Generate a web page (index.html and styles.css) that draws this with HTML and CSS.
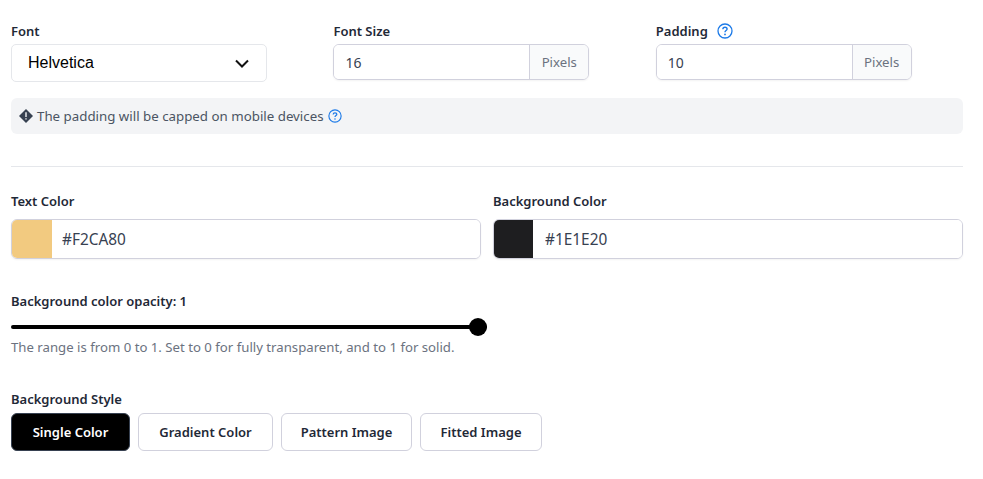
FILE: index.html
```html
<!DOCTYPE html>
<html lang="en">
<head>
  <meta charset="UTF-8">
  <meta name="viewport" content="width=device-width, initial-scale=1.0">
  <title>Text Settings</title>
  <link rel="stylesheet" href="styles.css">
</head>
<body>
<form class="settings">
  <div class="top-row">
    <div class="field">
      <label class="field-label" for="font">Font</label>
      <div class="select-wrap">
        <select id="font" class="font-select">
          <option>Helvetica</option>
        </select>
        <svg class="chevron" width="16" height="10" viewBox="0 0 16 10"><path d="M2 1.5 8 7.5 14 1.5" fill="none" stroke="#111" stroke-width="2"/></svg>
      </div>
    </div>
    <div class="field">
      <label class="field-label" for="fontSize">Font Size</label>
      <div class="unit-input">
        <input id="fontSize" type="text" value="16">
        <span class="unit">Pixels</span>
      </div>
    </div>
    <div class="field">
      <label class="field-label" for="padding">Padding
        <svg class="help help-large" viewBox="0 0 16 16"><circle cx="8" cy="8" r="7" fill="none" stroke="#1c7ae8" stroke-width="1.3"/><path d="M5.9 6.2C5.9 5 6.9 4.3 8 4.3S10.1 5 10.1 6.1C10.1 7.5 8 7.6 8 9.2" fill="none" stroke="#1c7ae8" stroke-width="1.4"/><circle cx="8" cy="11.4" r=".9" fill="#1c7ae8"/></svg>
      </label>
      <div class="unit-input">
        <input id="padding" type="text" value="10">
        <span class="unit">Pixels</span>
      </div>
    </div>
  </div>

  <div class="note">
    <svg class="note-icon" viewBox="0 0 14 14"><path d="M7 0 14 7 7 14 0 7Z" fill="#374151"/><path d="M6.3 3.2H7.7V8H6.3ZM6.3 9.2H7.7V10.6H6.3Z" fill="#f3f4f6"/></svg>
    <span>The padding will be capped on mobile devices</span>
    <svg class="help" viewBox="0 0 16 16"><circle cx="8" cy="8" r="7" fill="none" stroke="#1c7ae8" stroke-width="1.3"/><path d="M5.9 6.2C5.9 5 6.9 4.3 8 4.3S10.1 5 10.1 6.1C10.1 7.5 8 7.6 8 9.2" fill="none" stroke="#1c7ae8" stroke-width="1.4"/><circle cx="8" cy="11.4" r=".9" fill="#1c7ae8"/></svg>
  </div>

  <hr class="divider">

  <div class="color-row">
    <div class="field">
      <label class="field-label" for="textColor">Text Color</label>
      <div class="color-input">
        <span class="swatch swatch-text"></span>
        <input id="textColor" type="text" value="#F2CA80">
      </div>
    </div>
    <div class="field">
      <label class="field-label" for="bgColor">Background Color</label>
      <div class="color-input">
        <span class="swatch swatch-bg"></span>
        <input id="bgColor" type="text" value="#1E1E20">
      </div>
    </div>
  </div>

  <div class="opacity">
    <label class="field-label" for="opacity">Background color opacity: 1</label>
    <input id="opacity" class="range" type="range" min="0" max="1" step="0.1" value="1">
    <p class="hint">The range is from 0 to 1. Set to 0 for fully transparent, and to 1 for solid.</p>
  </div>

  <div class="bg-style">
    <span class="field-label">Background Style</span>
    <div class="style-buttons">
      <button type="button" class="style-btn active">Single Color</button>
      <button type="button" class="style-btn">Gradient Color</button>
      <button type="button" class="style-btn">Pattern Image</button>
      <button type="button" class="style-btn">Fitted Image</button>
    </div>
  </div>
</form>
</body>
</html>
```

FILE: styles.css
```css
body { margin: 0; background: #fff; font-family: "Noto Sans", "Open Sans", Arial, sans-serif; font-size: 13.2px; color: #1f2937; }
.settings { width: 952px; padding: 22px 0 0 11px; }
.top-row { display: grid; grid-template-columns: repeat(3, 256px); column-gap: 66.4px; }
.field { display: flex; flex-direction: column; }
.field-label { display: flex; align-items: center; gap: 9px; height: 18px; font-weight: 600; font-size: 13px; color: #1f2937; }
.top-row .field-label { margin-bottom: 4px; }
.select-wrap { position: relative; }
.font-select { display: block; width: 100%; height: 38px; padding: 0 16px 2px; border: 1px solid #e5e7eb; border-radius: 5px; background: #fff; appearance: none; font-family: "Liberation Sans", Arial, sans-serif; font-size: 16px; color: #000; }
.chevron { position: absolute; right: 17px; top: 15px; }
.unit-input { display: flex; height: 36px; border: 1px solid #d1d1dd; border-radius: 6px; overflow: hidden; box-sizing: border-box; box-shadow: 0 1px 2px rgba(0,0,0,.05); }
.unit-input input { flex: 1; min-width: 0; padding: 0 11px; border: none; font: inherit; font-size: 14px; color: #374151; }
.unit { display: flex; align-items: center; padding: 0 11.5px; border-left: 1px solid #d1d1dd; background: #f9fafb; color: #6b7280; }
.help { width: 14px; height: 14px; }
.help-large { width: 16px; height: 16px; }
.note { display: flex; align-items: center; gap: 4px; height: 36px; margin-top: 16px; padding-left: 8px; border-radius: 6px; background: #f3f4f6; color: #4b5563; font-size: 13.3px; }
.note-icon { width: 14px; height: 14px; }
.divider { height: 1px; margin: 32px 0 0; border: none; background: #e5e7eb; }
.color-row { display: grid; grid-template-columns: 470px 470px; column-gap: 12px; margin-top: 25px; }
.color-row .field-label { margin-bottom: 9px; }
.color-input { display: flex; height: 40px; border: 1px solid #d1d1dd; border-radius: 6px; overflow: hidden; box-sizing: border-box; box-shadow: 0 1px 2px rgba(0,0,0,.05); }
.swatch { width: 40px; }
.swatch-text { background: #f2ca80; }
.swatch-bg { width: 39px; margin-right: 2px; background: #1e1e20; }
.color-input input { flex: 1; min-width: 0; padding: 0 10px; border: none; font: inherit; font-size: 15.4px; color: #374151; }
.opacity { margin-top: 33px; }
.range { display: block; width: 476px; height: 18px; margin: 8px 0 0; appearance: none; background: transparent; }
.range::-webkit-slider-runnable-track { height: 4px; border-radius: 2px; background: #000; }
.range::-webkit-slider-thumb { appearance: none; width: 18px; height: 18px; margin-top: -7px; border-radius: 50%; background: #000; }
.hint { margin: 2px 0 0; color: #6b7280; }
.bg-style { margin-top: 34px; }
.style-buttons { display: grid; grid-template-columns: 119px 135px 131px 122px; gap: 8px; margin-top: 5px; }
.style-btn { height: 38px; padding: 0; border: 1px solid #d1d1dd; border-radius: 6px; background: #fff; font: inherit; font-size: 13px; font-weight: 600; color: #1f2937; }
.style-btn.active { border-color: #374151; background: #000; color: #fff; }
```
